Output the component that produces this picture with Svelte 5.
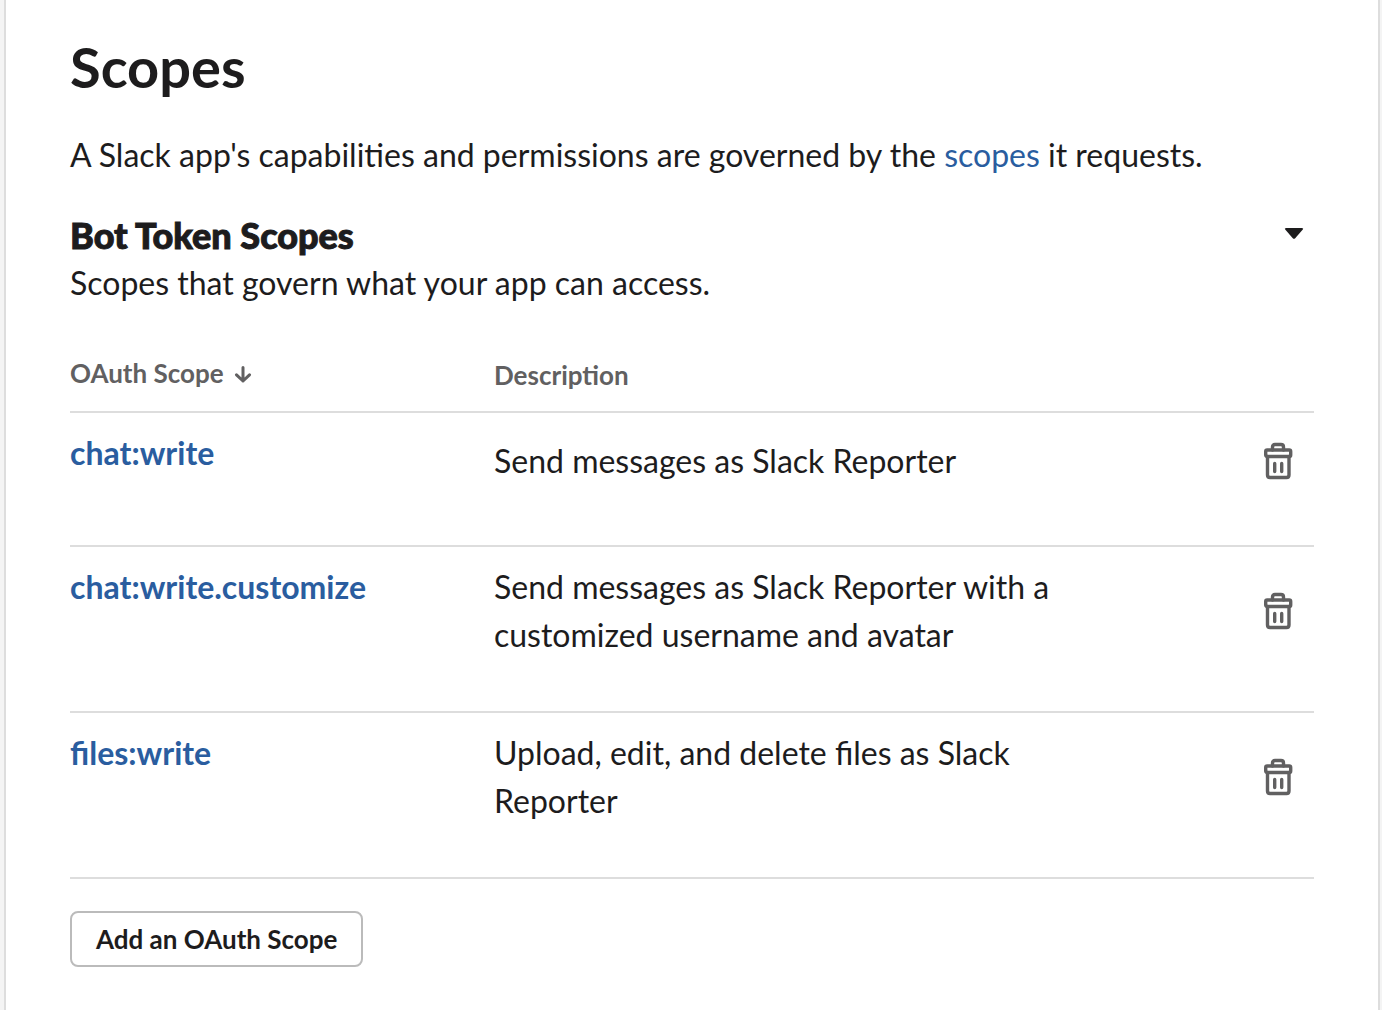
<script>
  const scopes = [
    { name: 'chat:write', text: 'Send messages as Slack Reporter' },
    { name: 'chat:write.customize', text: 'Send messages as Slack Reporter with a customized username and avatar' },
    { name: 'files:write', text: 'Upload, edit, and delete files as Slack Reporter' }
  ];
  let open = $state(true);
</script>

<main class="card">
  <h1>Scopes</h1>
  <p class="intro">A Slack app's capabilities and permissions are governed by the <a href="#scopes">scopes</a> it requests.</p>

  <section>
    <header>
      <div>
        <h2>Bot Token Scopes</h2>
        <p>Scopes that govern what your app can access.</p>
      </div>
      <button class="toggle" aria-label="Toggle bot token scopes" aria-expanded={open} onclick={() => (open = !open)}>
        <svg width="20" height="14" viewBox="0 0 20 14" aria-hidden="true"><path d="M2.2 1H17.8Q20 1 18.6 2.8L11.2 11.3Q10 12.4 8.8 11.3L1.4 2.8Q0 1 2.2 1Z" fill="#1d1c1d" /></svg>
      </button>
    </header>

    {#if open}
      <table>
        <colgroup><col class="c-name" /><col /><col class="c-action" /></colgroup>
        <thead>
          <tr>
            <th scope="col">
              <button class="sort">OAuth Scope
                <svg width="18" height="20" viewBox="0 -2 18 20" aria-hidden="true"><path d="M9 2.5V16M2.5 9.8L9 16L15.5 9.8" fill="none" stroke="currentColor" stroke-width="3" stroke-linejoin="round" stroke-linecap="round" /></svg>
              </button>
            </th>
            <th scope="col" class="desc">Description</th>
            <td></td>
          </tr>
        </thead>
        <tbody>
          {#each scopes as scope}
            <tr>
              <td class="name"><a href="#{scope.name}">{scope.name}</a></td>
              <td class="text">{scope.text}</td>
              <td class="action">
                <button class="trash" aria-label="Delete {scope.name}">
                  <svg width="30" height="38" viewBox="1 0 30 38" fill="none" stroke="currentColor" stroke-width="3.4" stroke-linejoin="round" stroke-linecap="round" aria-hidden="true">
                    <path d="M9.5 8V5Q9.500 2.500 12 2.500H18Q20.500 2.500 20.500 5V8" />
                    <rect x="2.7" y="8" width="25" height="6.5" rx="1.5" />
                    <path d="M4.500 14.500V33Q4.500 35.500 7 35.500H23.500Q26 35.500 26 33V14.500" />
                    <path d="M11.700 21.500V29.500M18.700 21.500V29.500" />
                  </svg>
                </button>
              </td>
            </tr>
          {/each}
        </tbody>
      </table>
    {/if}
  </section>

  <button class="add">Add an OAuth Scope</button>
</main>

<style>
  :global(body) { margin: 0; background: #f4f4f4; }
  :global(*) { box-sizing: border-box; }
  .card {
    min-height: 100vh;
    margin: 0 2px 0 4px;
    padding: 35px 64px 43px;
    border: solid #ddd;
    border-width: 0 2px;
    background: #fff;
    color: #1d1c1d;
    font: 32px/48px Lato, sans-serif;
  }
  h1, h2, p { margin: 0; }
  h1 { font-size: 56px; line-height: 64px; font-weight: 700; }
  .intro { margin-top: 32px; }
  a { color: #2a5d9f; text-decoration: none; }
  button { padding: 0; border: 0; background: none; color: inherit; font: inherit; cursor: pointer; }
  header { display: flex; justify-content: space-between; align-items: flex-start; margin-top: 32px; }
  h2 { font-size: 36px; line-height: 48px; font-weight: 900; -webkit-text-stroke: 1px currentColor; }
  .toggle { display: flex; padding: 16px 10px; }
  table { width: 100%; margin-top: 32px; border-collapse: collapse; table-layout: fixed; }
  .c-name { width: 424px; }
  .c-action { width: 176px; }
  th { padding: 18px 0 22px; text-align: left; vertical-align: top; font-size: 26px; line-height: 32px; font-weight: 700; color: #616061; }
  th.desc { padding-top: 20px; padding-bottom: 20px; }
  .sort { display: flex; align-items: center; gap: 10px; }
  tr { border-bottom: 2px solid #ddd; }
  td { padding: 0; }
  .name { padding-top: 16px; vertical-align: top; font-weight: 700; }
  .text { height: 134px; padding: 16px 80px 52px 0; }
  .action { padding: 0 20px 36px 0; }
  .trash { display: flex; margin-left: auto; color: #616061; }
  .add { height: 56px; margin-top: 32px; padding: 0 24px; border: 2px solid #bbb; border-radius: 8px; font-size: 26px; line-height: 32px; font-weight: 700; }
</style>
